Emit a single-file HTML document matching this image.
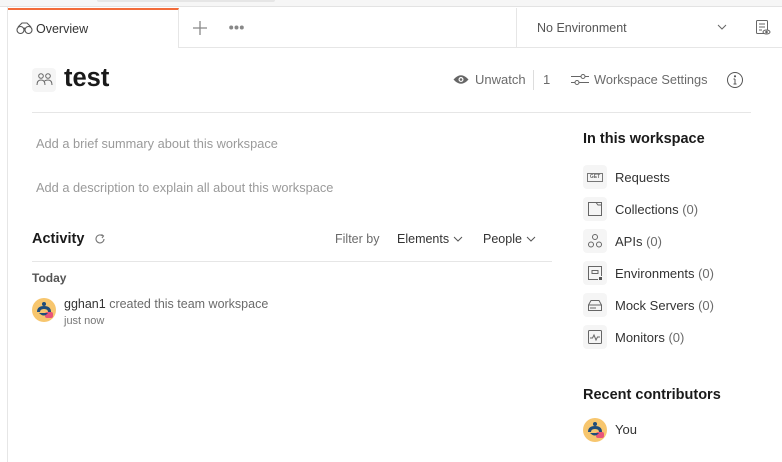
<!DOCTYPE html><html><head><style>
*{box-sizing:border-box;margin:0;padding:0}
body{width:782px;height:462px;overflow:hidden;background:#fff;font-family:"Liberation Sans",sans-serif;position:relative;color:#212121}
.a{position:absolute}
.g{color:#6b6b6b}
.ic{position:absolute;width:24px;height:24px;background:#f5f5f5;border-radius:4px}
.it{position:absolute;left:615px;font-size:13px;color:#333}
.it span{color:#6b6b6b}
</style></head><body>
<div class="a" style="left:0;top:0;width:782px;height:7px;background:#f6f6f6;border-bottom:1px solid #e3e3e3"></div>
<div class="a" style="left:97px;top:0;width:178px;height:2px;background:#e6e6e6;border-radius:0 0 3px 3px"></div>
<div class="a" style="left:0;top:7px;width:8px;height:455px;border-right:1px solid #e6e6e6;background:#fff"></div>
<div class="a" style="left:8px;top:47px;width:774px;height:1px;background:#e6e6e6"></div>
<div class="a" style="left:8px;top:8px;width:171px;height:40px;background:#fff;border-top:2px solid #f26b3a;border-right:1px solid #e6e6e6"></div>
<svg class="a" style="left:16px;top:21px" width="17" height="14" viewBox="0 0 17 14" fill="none" stroke="#555" stroke-width="1.1"><circle cx="4.5" cy="9" r="3.5"/><circle cx="12.5" cy="9" r="3.5"/><path d="M2 6 L6 2 H11 L15 6 M8 8 Q8.5 6 9 8"/></svg>
<div class="a" style="left:36px;top:22px;font-size:12.5px;color:#333">Overview</div>
<svg class="a" style="left:193px;top:21px" width="14" height="14"><path d="M7 0v14M0 7h14" stroke="#888" stroke-width="1.3"/></svg>
<svg class="a" style="left:229px;top:25px" width="15" height="5" fill="#888"><circle cx="2.2" cy="2.5" r="2"/><circle cx="7.5" cy="2.5" r="2"/><circle cx="12.8" cy="2.5" r="2"/></svg>
<div class="a" style="left:516px;top:8px;width:1px;height:39px;background:#e6e6e6"></div>
<div class="a" style="left:537px;top:21px;font-size:12.5px;color:#555">No Environment</div>
<svg class="a" style="left:717px;top:24px" width="10" height="6"><path d="M1 1 L5 5 L9 1" fill="none" stroke="#666"/></svg>
<svg class="a" style="left:755px;top:19px" width="16" height="17" fill="none" stroke="#666"><rect x="1.5" y="1.5" width="11" height="13" rx="1"/><path d="M4 5h6M4 8h6M4 11h3"/><ellipse cx="11.5" cy="13" rx="3.5" ry="2" fill="#fff"/><circle cx="11.5" cy="13" r="0.8" fill="#666"/></svg>
<div class="ic" style="left:32px;top:68px"></div>
<svg class="a" style="left:36px;top:72px" width="17" height="15" fill="none" stroke="#666" stroke-width="1"><circle cx="5" cy="4" r="2.3"/><circle cx="12" cy="4" r="2.3"/><path d="M1 13 Q1 8 5 8 Q9 8 9 13M8.5 9Q10 8 12 8Q16 8 16 13"/></svg>
<div class="a" style="left:64px;top:64px;font-size:25.5px;font-weight:bold;color:#1a1a1a">test</div>
<svg class="a" style="left:453px;top:74px" width="16" height="11"><path d="M0.5 5.5 Q8 -3 15.5 5.5 Q8 14 0.5 5.5Z" fill="#666"/><circle cx="8" cy="5.5" r="2.5" fill="#fff"/><circle cx="8" cy="5.5" r="1.3" fill="#666"/></svg>
<div class="a g" style="left:475px;top:72px;font-size:13px">Unwatch</div>
<div class="a" style="left:533px;top:70px;width:1px;height:20px;background:#ddd"></div>
<div class="a g" style="left:543px;top:72px;font-size:13px">1</div>
<svg class="a" style="left:571px;top:73px" width="18" height="13" fill="none" stroke="#666"><path d="M0 3.5h10M14 3.5h4M0 9.5h4M8 9.5h10"/><circle cx="12" cy="3.5" r="2"/><circle cx="6" cy="9.5" r="2"/></svg>
<div class="a g" style="left:594px;top:72px;font-size:12.8px">Workspace Settings</div>
<svg class="a" style="left:726px;top:71px" width="18" height="18" fill="none" stroke="#555"><circle cx="9" cy="9" r="7.5"/><path d="M9 8v5M7.5 13h3M7.5 8H9"/><circle cx="9" cy="5.3" r="0.6" fill="#555"/></svg>
<div class="a" style="left:32px;top:112px;width:719px;height:1px;background:#e6e6e6"></div>
<div class="a" style="left:36px;top:136px;font-size:12.8px;color:#9a9a9a">Add a brief summary about this workspace</div>
<div class="a" style="left:36px;top:180px;font-size:12.8px;color:#9a9a9a">Add a description to explain all about this workspace</div>
<div class="a" style="left:32px;top:231px;font-size:14.5px;font-weight:bold;color:#1a1a1a">Activity</div>
<svg class="a" style="left:94px;top:233px" width="12" height="12" fill="none" stroke="#777" stroke-width="1.1"><path d="M10 6A4 4 0 1 1 8.5 2.8"/><path d="M7.5 1.5L9.5 3L8 5" /></svg>
<div class="a g" style="left:335px;top:232px;font-size:12.5px">Filter by</div>
<div class="a" style="left:397px;top:232px;font-size:12.5px;color:#333">Elements</div>
<svg class="a" style="left:453px;top:236px" width="10" height="6"><path d="M1 1 L5 5 L9 1" fill="none" stroke="#555"/></svg>
<div class="a" style="left:483px;top:232px;font-size:12.5px;color:#333">People</div>
<svg class="a" style="left:526px;top:236px" width="10" height="6"><path d="M1 1 L5 5 L9 1" fill="none" stroke="#555"/></svg>
<div class="a" style="left:32px;top:261px;width:520px;height:1px;background:#e6e6e6"></div>
<div class="a" style="left:32px;top:271px;font-size:12px;font-weight:bold;color:#555">Today</div>
<svg class="a" style="left:32px;top:298px" width="24" height="24"><circle cx="12" cy="12" r="12" fill="#f7c66e"/><path d="M5 14 Q5 8 12 8 Q19 8 19 14 L16 14 Q16 11 12 11 Q8 11 8 14Z" fill="#1f4c7a"/><circle cx="12" cy="6" r="2" fill="#1f4c7a"/><rect x="13" y="14" width="8" height="6" rx="2" fill="#e8557a"/><path d="M7 15 Q12 20 16 15" fill="#1f4c7a"/></svg>
<div class="a" style="left:64px;top:297px;font-size:12.5px;color:#6b6b6b"><span style="color:#333">gghan1</span> created this team workspace</div>
<div class="a" style="left:64px;top:315px;font-size:11px;color:#777">just now</div>
<div class="a" style="left:583px;top:131px;font-size:14.5px;font-weight:bold;color:#1a1a1a">In this workspace</div>
<div class="ic" style="left:583px;top:165px"></div><div class="a" style="left:587px;top:173px;width:16px;height:9px;border:1px solid #777;font-size:5px;font-weight:bold;color:#666;text-align:center;line-height:7px">GET</div>
<div class="it" style="top:170px">Requests</div>
<div class="ic" style="left:583px;top:197px"></div><svg class="a" style="left:587px;top:201px" width="16" height="16" fill="none" stroke="#666"><path d="M1.5 1.5h13v13h-13z M9 1.5 L11 4h3.5"/></svg>
<div class="it" style="top:202px">Collections <span>(0)</span></div>
<div class="ic" style="left:583px;top:229px"></div><svg class="a" style="left:587px;top:233px" width="16" height="16" fill="none" stroke="#666"><circle cx="8" cy="4" r="2.5"/><circle cx="4" cy="11.5" r="2.5"/><circle cx="12" cy="11.5" r="2.5"/></svg>
<div class="it" style="top:234px">APIs <span>(0)</span></div>
<div class="ic" style="left:583px;top:261px"></div><svg class="a" style="left:587px;top:265px" width="16" height="16" fill="none" stroke="#666"><path d="M14.5 11V1.5h-13v13H11"/><path d="M5 5.5h6v3H5z"/><rect x="12" y="12" width="3" height="3" fill="#555" stroke="none"/></svg>
<div class="it" style="top:266px">Environments <span>(0)</span></div>
<div class="ic" style="left:583px;top:293px"></div><svg class="a" style="left:587px;top:297px" width="16" height="16" fill="none" stroke="#666"><path d="M1.5 8 L4 3.5h8L14.5 8v5.5h-13z M1.5 8h13 M4 10v2M6 10v2M8 10v2"/></svg>
<div class="it" style="top:298px">Mock Servers <span>(0)</span></div>
<div class="ic" style="left:583px;top:325px"></div><svg class="a" style="left:587px;top:329px" width="16" height="16" fill="none" stroke="#666"><rect x="1.5" y="1.5" width="13" height="13" rx="1"/><path d="M3 9h2.5l1.5-3 2 5 1.5-3h2.5"/></svg>
<div class="it" style="top:330px">Monitors <span>(0)</span></div>
<div class="a" style="left:583px;top:387px;font-size:14.5px;font-weight:bold;color:#1a1a1a">Recent contributors</div>
<svg class="a" style="left:583px;top:418px" width="24" height="24"><circle cx="12" cy="12" r="12" fill="#f7c66e"/><path d="M5 14 Q5 8 12 8 Q19 8 19 14 L16 14 Q16 11 12 11 Q8 11 8 14Z" fill="#1f4c7a"/><circle cx="12" cy="6" r="2" fill="#1f4c7a"/><rect x="13" y="14" width="8" height="6" rx="2" fill="#e8557a"/><path d="M7 15 Q12 20 16 15" fill="#1f4c7a"/></svg>
<div class="a" style="left:615px;top:422px;font-size:13px;color:#333">You</div>
</body></html>
